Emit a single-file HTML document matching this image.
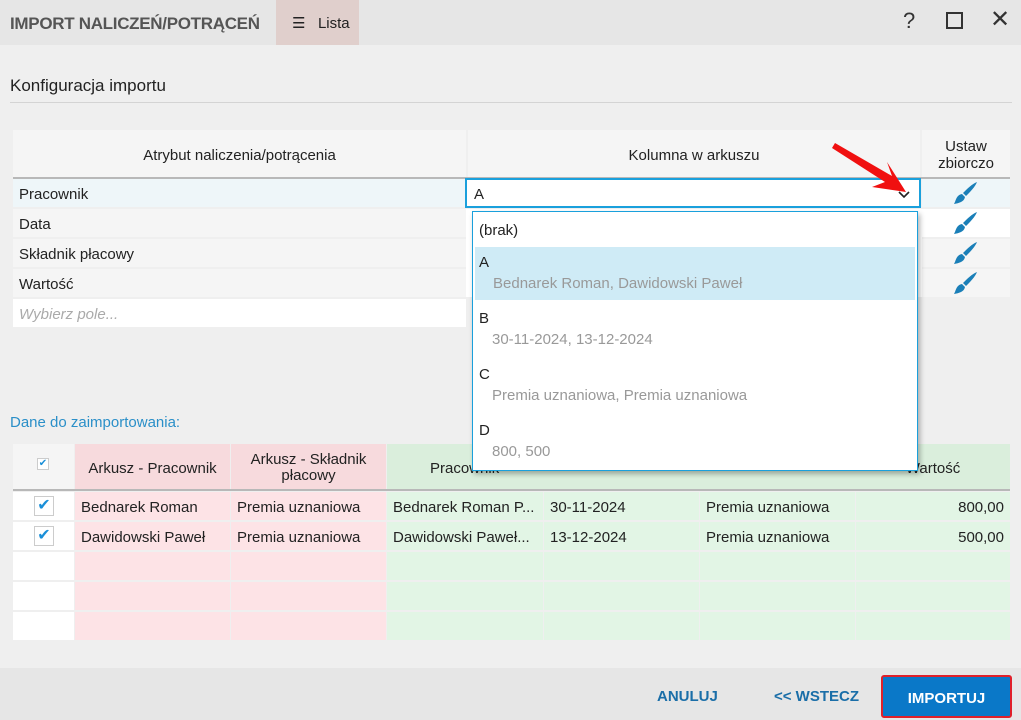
<!DOCTYPE html>
<html><head><meta charset="utf-8"><style>
*{box-sizing:border-box;margin:0;padding:0}
body{width:1021px;height:720px;background:#efefef;font-family:"Segoe UI","Liberation Sans",sans-serif;font-size:15px;color:#222;position:relative;overflow:hidden}
.a{position:absolute}
.c{display:flex;align-items:center;padding-top:3px}
</style></head><body>
<div class="a" style="left:0;top:0;width:1021px;height:45px;background:#e6e6e6"></div>
<div class="a c" style="left:10px;top:0;height:45px;font-weight:bold;font-size:17px;color:#555;letter-spacing:-0.3px">IMPORT NALICZEŃ/POTRĄCEŃ</div>
<div class="a c" style="left:276px;top:0;width:83px;height:45px;background:#e0cfcc;font-size:15px;padding-left:16px;padding-top:0">☰&nbsp;&nbsp;&nbsp;Lista</div>
<div class="a" style="left:903px;top:8px;font-size:22px;color:#333">?</div>
<div class="a" style="left:946px;top:12px;width:17px;height:17px;border:2px solid #333"></div>
<div class="a" style="left:990px;top:8px;font-size:24px;color:#333;line-height:24px">✕</div>
<div class="a" style="left:10px;top:76px;font-size:17px">Konfiguracja importu</div>
<div class="a" style="left:10px;top:102px;width:1002px;height:1px;background:#d4d4d4"></div>
<!-- top table -->
<div class="a c" style="left:13px;top:130px;width:453px;height:47px;background:#f5f5f5;justify-content:center">Atrybut naliczenia/potrącenia</div>
<div class="a c" style="left:468px;top:130px;width:452px;height:47px;background:#f5f5f5;justify-content:center">Kolumna w arkuszu</div>
<div class="a c" style="left:922px;top:130px;width:88px;height:47px;background:#f5f5f5;justify-content:center;text-align:center;line-height:17px">Ustaw<br>zbiorczo</div>
<div class="a" style="left:13px;top:177px;width:997px;height:2px;background:#b8b8b8"></div>
<div class="a c" style="left:13px;top:179px;width:453px;height:28px;background:#eef6f9;padding-left:6px">Pracownik</div>
<div class="a c" style="left:13px;top:209px;width:453px;height:28px;background:#f5f5f5;padding-left:6px">Data</div>
<div class="a c" style="left:13px;top:239px;width:453px;height:28px;background:#f5f5f5;padding-left:6px">Składnik płacowy</div>
<div class="a c" style="left:13px;top:269px;width:453px;height:28px;background:#f5f5f5;padding-left:6px">Wartość</div>
<div class="a c" style="left:13px;top:299px;width:453px;height:28px;background:#fff;padding-left:6px;font-style:italic;color:#aaa">Wybierz pole...</div>
<div class="a" style="left:466px;top:209px;width:456px;height:88px;background:#fff"></div>
<div class="a" style="left:922px;top:179px;width:88px;height:28px;background:#eef6f9"></div>
<div class="a" style="left:922px;top:209px;width:88px;height:28px;background:#fff"></div>
<div class="a" style="left:922px;top:239px;width:88px;height:28px;background:#f5f5f5"></div>
<div class="a" style="left:922px;top:269px;width:88px;height:28px;background:#f5f5f5"></div>
<svg class="a" style="left:953px;top:181px" width="26" height="116" viewBox="0 0 26 116">
<g fill="#1a7fb8"><g id="b"><path d="M24 1 C22 6 17 11 13 15 L10 12 C14 8 19 3 24 1 Z"/><path d="M9 13 L12 16 C11 21 6 22 1 23 C3 20 3 14 9 13 Z"/></g>
<use href="#b" y="30"/><use href="#b" y="60"/><use href="#b" y="90"/></g></svg>
<div class="a c" style="left:465px;top:178px;width:456px;height:30px;background:#fff;border:2px solid #1aa0dc;padding-left:7px;padding-top:2px">A</div>
<svg class="a" style="left:897px;top:189px" width="14" height="10"><path d="M2 3 L7 8 L12 3" fill="none" stroke="#222" stroke-width="1.6"/></svg>
<svg class="a" style="left:830px;top:140px" width="80" height="60"><path d="M5 3 L62 36 L57 22 L76 52 L42 47 L55 42 L2 8 Z" fill="#f01010"/></svg>
<!-- bottom section -->
<div class="a" style="left:10px;top:414px;color:#2a8fc8;font-size:15px">Dane do zaimportowania:</div>
<div class="a" style="left:13px;top:444px;width:61px;height:45px;background:#f5f5f5"></div>
<div class="a c" style="left:75px;top:444px;width:155px;height:45px;background:#f7dadd;justify-content:center">Arkusz - Pracownik</div>
<div class="a c" style="left:231px;top:444px;width:155px;height:45px;background:#f7dadd;justify-content:center;text-align:center;line-height:16px">Arkusz - Składnik<br>płacowy</div>
<div class="a c" style="left:387px;top:444px;width:623px;height:45px;background:#daeedc;padding-left:43px">Pracownik</div>
<div class="a c" style="left:856px;top:444px;width:154px;height:45px;background:#daeedc;justify-content:center">Wartość</div>
<div class="a" style="left:37px;top:458px;width:12px;height:12px;border:1px solid #ccc;background:#fff;color:#1a8fd8;font-size:10px;line-height:10px;text-align:center">✔</div>
<div class="a" style="left:13px;top:489px;width:997px;height:2px;background:#b8b8b8"></div>
<div id="rows"></div>
<script>
var cols=[[13,61],[75,155],[231,155],[387,156],[544,155],[700,155],[856,154]];
var data=[["","Bednarek Roman","Premia uznaniowa","Bednarek Roman P...","30-11-2024","Premia uznaniowa","800,00"],["","Dawidowski Paweł","Premia uznaniowa","Dawidowski Paweł...","13-12-2024","Premia uznaniowa","500,00"],[],[],[]];
var h="";
data.forEach(function(r,i){var y=492+i*30;cols.forEach(function(c,j){var bg=j==0?"#fff":(j<3?"#fde3e6":"#e2f5e5");var t=r[j]||"";var al=j==6?"justify-content:flex-end;padding-right:6px":"padding-left:6px";h+='<div class="a c" style="left:'+c[0]+'px;top:'+y+'px;width:'+c[1]+'px;height:28px;background:'+bg+';'+al+'">'+t+'</div>';});
if(r.length)h+='<div class="a" style="left:34px;top:'+(y+4)+'px;width:20px;height:20px;border:1px solid #ccc;background:#fff;color:#1a8fd8;font-size:16px;line-height:18px;text-align:center">✔</div>';});
document.getElementById("rows").outerHTML=h;
</script>
<!-- dropdown -->
<div class="a" style="left:472px;top:211px;width:446px;height:260px;background:#fff;border:1px solid #1aa0dc;box-shadow:2px 3px 5px rgba(0,0,0,.3)">
<div style="height:35px;padding:10px 0 0 6px">(brak)</div>
<div style="height:53px;margin:0 2px;background:#cfebf6;padding:7px 0 0 4px">A<div style="color:#999;padding-left:14px;margin-top:4px">Bednarek Roman, Dawidowski Paweł</div></div>
<div style="height:56px;padding:10px 0 0 6px">B<div style="color:#999;padding-left:13px;margin-top:4px">30-11-2024, 13-12-2024</div></div>
<div style="height:56px;padding:10px 0 0 6px">C<div style="color:#999;padding-left:13px;margin-top:4px">Premia uznaniowa, Premia uznaniowa</div></div>
<div style="height:56px;padding:10px 0 0 6px">D<div style="color:#999;padding-left:13px;margin-top:4px">800, 500</div></div>
</div>
<!-- footer -->
<div class="a" style="left:0;top:668px;width:1021px;height:52px;background:#e6e6e6"></div>
<div class="a" style="left:657px;top:688px;font-weight:bold;color:#1a6ea8;font-size:15px">ANULUJ</div>
<div class="a" style="left:774px;top:688px;font-weight:bold;color:#1a6ea8;font-size:15px">&lt;&lt; WSTECZ</div>
<div class="a c" style="left:881px;top:675px;width:131px;height:43px;background:#0a78c8;border:2px solid #e0202a;border-radius:3px;justify-content:center;color:#fff;font-weight:bold;font-size:15px">IMPORTUJ</div>
</body></html>
